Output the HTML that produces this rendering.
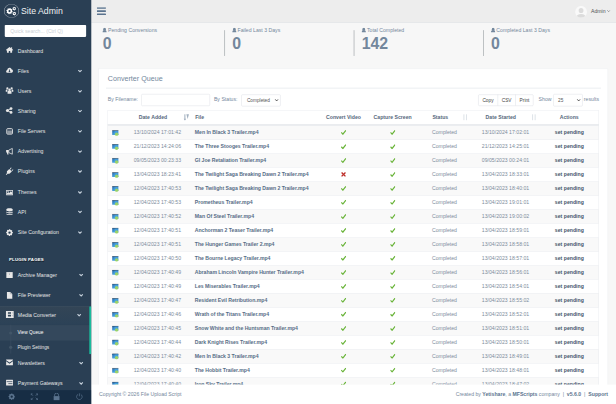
<!DOCTYPE html>
<html><head><meta charset="utf-8">
<style>
html,body{margin:0;padding:0;width:616px;height:404px;overflow:hidden;background:#F7F7F7;}
#wrap{position:absolute;left:0;top:0;width:1552px;height:1018px;transform:scale(0.396907);transform-origin:0 0;overflow:hidden;background:#F7F7F7;font-family:"Liberation Sans",sans-serif;font-size:13px;color:#73879C;}
.a{position:absolute;white-space:nowrap;}
#side{position:absolute;left:0;top:0;width:230px;height:1018px;background:#2A3F54;overflow:hidden;}
.mt{position:absolute;left:45px;line-height:20px;color:#E7E7E7;font-size:13px;white-space:nowrap;}
.ic{position:absolute;fill:#E7E7E7;overflow:visible;}
.chev{position:absolute;width:10px;height:7px;}
#top{position:absolute;left:230px;top:0;width:1322px;height:56.6px;background:#EDEDED;border-bottom:1px solid #D9DEE4;}
.tile{position:absolute;top:58px;width:326px;height:100px;}
.tile .sep{position:absolute;left:0;top:17.6px;height:65px;border-left:2px solid #ADB2B5;}
.tile .lab{position:absolute;left:20px;top:5.6px;line-height:20px;font-size:13px;white-space:nowrap;}
.tile .cnt{position:absolute;left:18px;top:31px;line-height:47px;font-size:40px;font-weight:bold;}
#panel{position:absolute;left:248px;top:173px;width:1282px;height:900px;background:#fff;border:1px solid #E6E9ED;}
#footer{position:absolute;left:230px;top:969px;width:1322px;height:49px;background:#fff;}
</style></head><body><div id="wrap">
<div id="top"></div>
<svg class="a" style="left:244px;top:18px;width:23px;height:20px" viewBox="0 0 23 20"><g fill="#5A738E"><rect x="0" y="0" width="23" height="4" rx="1"/><rect x="0" y="8" width="23" height="4" rx="1"/><rect x="0" y="16" width="23" height="4" rx="1"/></g></svg>
<svg class="a" style="left:1449px;top:14.5px;width:30px;height:30px" viewBox="0 0 30 30"><defs><clipPath id="avc"><circle cx="15" cy="15" r="15"/></clipPath></defs><circle cx="15" cy="15" r="15" fill="#F9F9F9"/><g clip-path="url(#avc)" fill="#DCDCDC"><ellipse cx="15" cy="11.5" rx="6" ry="6.5"/><path d="M3 31 c0-6 4-10.5 12-10.5 s12 4.5 12 10.5z"/></g></svg>
<div class="a" style="left:1489px;top:17.80px;line-height:20px;font-size:13px;color:#515356;">Admin</div>
<svg class="chev" style="left:1529px;top:25px;width:9px;height:6px" viewBox="0 0 10 7"><path d="M1 1.2 L5 5.2 L9 1.2" fill="none" stroke="#515356" stroke-width="1.6"/></svg>
<svg class="a" style="left:258.2px;top:69.5px;width:11px;height:12px;fill:#73879C" viewBox="0 0 12 14" preserveAspectRatio="none"><ellipse cx="6" cy="4" rx="3.6" ry="3.9"/><path d="M0 14 c0-4 1-6.5 3.5-7 c.8 .3 1.6 .5 2.5 .5 s1.7-.2 2.5-.5 c2.5 .5 3.5 3 3.5 7z"/><rect x="3.5" y="6" width="5" height="2"/></svg>
<div class="a" style="left:272.2px;top:65.60px;line-height:20px;font-size:13px;color:#73879C;">Pending Conversions</div>
<div class="a" style="left:259.0px;top:87.00px;line-height:47px;font-size:40px;font-weight:bold;color:#73879C">0</div>
<div class="a" style="left:565px;top:75.6px;width:2px;height:65px;background:#ADB2B5"></div>
<svg class="a" style="left:584.5px;top:69.5px;width:11px;height:12px;fill:#73879C" viewBox="0 0 12 14" preserveAspectRatio="none"><ellipse cx="6" cy="4" rx="3.6" ry="3.9"/><path d="M0 14 c0-4 1-6.5 3.5-7 c.8 .3 1.6 .5 2.5 .5 s1.7-.2 2.5-.5 c2.5 .5 3.5 3 3.5 7z"/><rect x="3.5" y="6" width="5" height="2"/></svg>
<div class="a" style="left:598.5px;top:65.60px;line-height:20px;font-size:13px;color:#73879C;">Failed Last 3 Days</div>
<div class="a" style="left:585.3px;top:87.00px;line-height:47px;font-size:40px;font-weight:bold;color:#73879C">0</div>
<div class="a" style="left:891px;top:75.6px;width:2px;height:65px;background:#ADB2B5"></div>
<svg class="a" style="left:910.5px;top:69.5px;width:11px;height:12px;fill:#73879C" viewBox="0 0 12 14" preserveAspectRatio="none"><ellipse cx="6" cy="4" rx="3.6" ry="3.9"/><path d="M0 14 c0-4 1-6.5 3.5-7 c.8 .3 1.6 .5 2.5 .5 s1.7-.2 2.5-.5 c2.5 .5 3.5 3 3.5 7z"/><rect x="3.5" y="6" width="5" height="2"/></svg>
<div class="a" style="left:924.5px;top:65.60px;line-height:20px;font-size:13px;color:#73879C;">Total Completed</div>
<div class="a" style="left:911.3px;top:87.00px;line-height:47px;font-size:40px;font-weight:bold;color:#73879C">142</div>
<div class="a" style="left:1217px;top:75.6px;width:2px;height:65px;background:#ADB2B5"></div>
<svg class="a" style="left:1236.5px;top:69.5px;width:11px;height:12px;fill:#73879C" viewBox="0 0 12 14" preserveAspectRatio="none"><ellipse cx="6" cy="4" rx="3.6" ry="3.9"/><path d="M0 14 c0-4 1-6.5 3.5-7 c.8 .3 1.6 .5 2.5 .5 s1.7-.2 2.5-.5 c2.5 .5 3.5 3 3.5 7z"/><rect x="3.5" y="6" width="5" height="2"/></svg>
<div class="a" style="left:1250.5px;top:65.60px;line-height:20px;font-size:13px;color:#73879C;">Completed Last 3 Days</div>
<div class="a" style="left:1237.3px;top:87.00px;line-height:47px;font-size:40px;font-weight:bold;color:#73879C">0</div>
<div class="a" style="left:248px;top:173px;width:1282px;height:900px;background:#fff;border:1px solid #E6E9ED;"></div>
<div class="a" style="left:271.7px;top:187.70px;line-height:20px;font-size:18px;color:#73879C;line-height:20px;">Converter Queue</div>
<div class="a" style="left:266.5px;top:220.8px;width:1247.5px;height:2px;background:#E6E9ED;"></div>
<div class="a" style="left:271.7px;top:240.00px;line-height:20px;font-size:13px;color:#73879C;">By Filename:</div>
<div class="a" style="left:356px;top:237px;width:171px;height:28px;border:1px solid #D5DAE0;border-radius:3px;background:#fff"></div>
<div class="a" style="left:539px;top:240.00px;line-height:20px;font-size:13px;color:#73879C;">By Status:</div>
<div class="a" style="left:608px;top:237.5px;width:97px;height:28px;border:1px solid #D5DAE0;border-radius:3px;background:#fff"></div>
<div class="a" style="left:622px;top:242.00px;line-height:20px;font-size:12px;color:#555;">Completed</div>
<svg class="chev" style="left:692px;top:249px;width:10px;height:7px" viewBox="0 0 10 7"><path d="M1 1.2 L5 5.2 L9 1.2" fill="none" stroke="#444" stroke-width="2.4"/></svg>
<div class="a" style="left:1205px;top:238px;width:137px;height:27px;border:1px solid #D5DAE0;border-radius:3px;background:#fff"></div>
<div class="a" style="left:1254px;top:238px;width:1px;height:28px;background:#D5DAE0"></div>
<div class="a" style="left:1299px;top:238px;width:1px;height:28px;background:#D5DAE0"></div>
<div class="a" style="left:1029.50px;width:400px;text-align:center;top:243.50px;line-height:20px;font-size:12px;color:#444;">Copy</div>
<div class="a" style="left:1076.50px;width:400px;text-align:center;top:243.50px;line-height:20px;font-size:12px;color:#444;">CSV</div>
<div class="a" style="left:1121.50px;width:400px;text-align:center;top:243.50px;line-height:20px;font-size:12px;color:#444;">Print</div>
<div class="a" style="left:1357px;top:240.00px;line-height:20px;font-size:13px;color:#73879C;">Show</div>
<div class="a" style="left:1394px;top:237px;width:72px;height:29px;border:1px solid #D5DAE0;border-radius:3px;background:#fff"></div>
<div class="a" style="left:1406px;top:242.00px;line-height:20px;font-size:12px;color:#555;">25</div>
<svg class="chev" style="left:1453px;top:249px;width:10px;height:7px" viewBox="0 0 10 7"><path d="M1 1.2 L5 5.2 L9 1.2" fill="none" stroke="#444" stroke-width="2.4"/></svg>
<div class="a" style="left:1471px;top:240.00px;line-height:20px;font-size:13px;color:#73879C;">results</div>
<div class="a" style="left:270.6px;top:278px;width:1238.9px;height:38.69999999999999px;border:1px solid #E6E9ED;border-bottom:0;box-sizing:border-box;background:#fff"></div>
<div class="a" style="left:270.6px;top:313.2px;width:1238.9px;height:3.5px;background:#E4E7EB"></div>
<div class="a" style="left:185.40px;width:400px;text-align:center;top:286.00px;line-height:20px;font-size:13px;color:#55687C;font-weight:bold;">Date Added</div>
<div class="a" style="left:491.8px;top:286.00px;line-height:20px;font-size:13px;color:#55687C;font-weight:bold;">File</div>
<div class="a" style="left:665.50px;width:400px;text-align:center;top:286.00px;line-height:20px;font-size:13px;color:#55687C;font-weight:bold;">Convert Video</div>
<div class="a" style="left:789.20px;width:400px;text-align:center;top:286.00px;line-height:20px;font-size:13px;color:#55687C;font-weight:bold;">Capture Screen</div>
<div class="a" style="left:1089.4px;top:286.00px;line-height:20px;font-size:13px;color:#55687C;font-weight:bold;">Status</div>
<div class="a" style="left:1061.80px;width:400px;text-align:center;top:286.00px;line-height:20px;font-size:13px;color:#55687C;font-weight:bold;">Date Started</div>
<div class="a" style="left:1234.20px;width:400px;text-align:center;top:286.00px;line-height:20px;font-size:13px;color:#55687C;font-weight:bold;">Actions</div>
<svg class="a" style="left:461.6px;top:287px;width:15px;height:17px" viewBox="0 0 15 17"><g fill="#A3B1C0"><rect x="2.5" y="1" width="2.6" height="15"/><path d="M0.5 12 h6.6 l-3.3 4z"/><path d="M7.5 1 h6.5 l-3.2 12z"/></g></svg>
<svg class="a" style="left:1165px;top:287px;width:15px;height:17px" viewBox="0 0 15 17"><g fill="#DFE4E9"><rect x="2.5" y="1" width="2.6" height="15"/><rect x="9" y="1" width="2.6" height="15"/></g></svg>
<svg class="a" style="left:1338px;top:287px;width:15px;height:17px" viewBox="0 0 15 17"><g fill="#DFE4E9"><rect x="2.5" y="1" width="2.6" height="15"/><rect x="9" y="1" width="2.6" height="15"/></g></svg>
<div class="a" style="left:270.6px;top:316.70px;width:1238.9px;height:35.23px;background:#F9F9F9;border-left:1px solid #E6E9ED;border-right:1px solid #E6E9ED;box-sizing:border-box"></div>
<svg class="a" style="left:281px;top:326.81px;width:19px;height:15.5px" viewBox="0 0 16.5 15.5"><defs><linearGradient id="fg" x1="0" y1="0" x2="1" y2="0.6"><stop offset="0" stop-color="#1F5E9E"/><stop offset="0.55" stop-color="#45A0E0"/><stop offset="1" stop-color="#3B93D6"/></linearGradient></defs><rect x="0.5" y="1.5" width="15.5" height="11.5" rx="0.8" fill="url(#fg)"/><rect x="0.5" y="1" width="15.5" height="1.4" fill="#3D4A58"/><circle cx="11.6" cy="11.3" r="4.5" fill="#9AD26A"/></svg>
<div class="a" style="left:196.60px;width:400px;text-align:center;top:324.31px;line-height:20px;font-size:13px;color:#7D8C9C;">13/10/2024 17:01:42</div>
<div class="a" style="left:490.8px;top:324.31px;line-height:20px;font-size:13px;color:#566D86;font-weight:bold;letter-spacing:-0.08px;">Men In Black 3 Trailer.mp4</div>
<svg class="a" style="left:858.5px;top:327.31px;width:13px;height:13px" viewBox="0 0 12 12"><path d="M0.8 6.2 L4.5 10.2 L11.5 1.2" fill="none" stroke="#6AB43A" stroke-width="2.8"/></svg>
<svg class="a" style="left:983px;top:327.31px;width:13px;height:13px" viewBox="0 0 12 12"><path d="M0.8 6.2 L4.5 10.2 L11.5 1.2" fill="none" stroke="#6AB43A" stroke-width="2.8"/></svg>
<div class="a" style="left:1088.4px;top:324.31px;line-height:20px;font-size:13px;color:#7D8C9C;">Completed</div>
<div class="a" style="left:1073.60px;width:400px;text-align:center;top:324.31px;line-height:20px;font-size:13px;color:#7D8C9C;">13/10/2024 17:02:01</div>
<div class="a" style="left:1234.40px;width:400px;text-align:center;top:324.31px;line-height:20px;font-size:13px;color:#44556A;font-weight:bold;">set pending</div>
<div class="a" style="left:270.6px;top:351.93px;width:1238.9px;height:35.23px;background:#fff;border-left:1px solid #E6E9ED;border-right:1px solid #E6E9ED;box-sizing:border-box"></div>
<div class="a" style="left:270.6px;top:351.43px;width:1238.9px;height:1px;background:#E6E9ED"></div>
<svg class="a" style="left:281px;top:362.05px;width:19px;height:15.5px" viewBox="0 0 16.5 15.5"><defs><linearGradient id="fg" x1="0" y1="0" x2="1" y2="0.6"><stop offset="0" stop-color="#1F5E9E"/><stop offset="0.55" stop-color="#45A0E0"/><stop offset="1" stop-color="#3B93D6"/></linearGradient></defs><rect x="0.5" y="1.5" width="15.5" height="11.5" rx="0.8" fill="url(#fg)"/><rect x="0.5" y="1" width="15.5" height="1.4" fill="#3D4A58"/><circle cx="11.6" cy="11.3" r="4.5" fill="#9AD26A"/></svg>
<div class="a" style="left:196.60px;width:400px;text-align:center;top:359.55px;line-height:20px;font-size:13px;color:#7D8C9C;">21/12/2023 14:24:06</div>
<div class="a" style="left:490.8px;top:359.55px;line-height:20px;font-size:13px;color:#566D86;font-weight:bold;letter-spacing:-0.08px;">The Three Stooges Trailer.mp4</div>
<svg class="a" style="left:858.5px;top:362.55px;width:13px;height:13px" viewBox="0 0 12 12"><path d="M0.8 6.2 L4.5 10.2 L11.5 1.2" fill="none" stroke="#6AB43A" stroke-width="2.8"/></svg>
<svg class="a" style="left:983px;top:362.55px;width:13px;height:13px" viewBox="0 0 12 12"><path d="M0.8 6.2 L4.5 10.2 L11.5 1.2" fill="none" stroke="#6AB43A" stroke-width="2.8"/></svg>
<div class="a" style="left:1088.4px;top:359.55px;line-height:20px;font-size:13px;color:#7D8C9C;">Completed</div>
<div class="a" style="left:1073.60px;width:400px;text-align:center;top:359.55px;line-height:20px;font-size:13px;color:#7D8C9C;">21/12/2023 14:25:01</div>
<div class="a" style="left:1234.40px;width:400px;text-align:center;top:359.55px;line-height:20px;font-size:13px;color:#44556A;font-weight:bold;">set pending</div>
<div class="a" style="left:270.6px;top:387.16px;width:1238.9px;height:35.23px;background:#F9F9F9;border-left:1px solid #E6E9ED;border-right:1px solid #E6E9ED;box-sizing:border-box"></div>
<div class="a" style="left:270.6px;top:386.66px;width:1238.9px;height:1px;background:#E6E9ED"></div>
<svg class="a" style="left:281px;top:397.27px;width:19px;height:15.5px" viewBox="0 0 16.5 15.5"><defs><linearGradient id="fg" x1="0" y1="0" x2="1" y2="0.6"><stop offset="0" stop-color="#1F5E9E"/><stop offset="0.55" stop-color="#45A0E0"/><stop offset="1" stop-color="#3B93D6"/></linearGradient></defs><rect x="0.5" y="1.5" width="15.5" height="11.5" rx="0.8" fill="url(#fg)"/><rect x="0.5" y="1" width="15.5" height="1.4" fill="#3D4A58"/><circle cx="11.6" cy="11.3" r="4.5" fill="#9AD26A"/></svg>
<div class="a" style="left:196.60px;width:400px;text-align:center;top:394.77px;line-height:20px;font-size:13px;color:#7D8C9C;">09/05/2023 00:23:33</div>
<div class="a" style="left:490.8px;top:394.77px;line-height:20px;font-size:13px;color:#566D86;font-weight:bold;letter-spacing:-0.08px;">GI Joe Retaliation Trailer.mp4</div>
<svg class="a" style="left:858.5px;top:397.77px;width:13px;height:13px" viewBox="0 0 12 12"><path d="M0.8 6.2 L4.5 10.2 L11.5 1.2" fill="none" stroke="#6AB43A" stroke-width="2.8"/></svg>
<svg class="a" style="left:983px;top:397.77px;width:13px;height:13px" viewBox="0 0 12 12"><path d="M0.8 6.2 L4.5 10.2 L11.5 1.2" fill="none" stroke="#6AB43A" stroke-width="2.8"/></svg>
<div class="a" style="left:1088.4px;top:394.77px;line-height:20px;font-size:13px;color:#7D8C9C;">Completed</div>
<div class="a" style="left:1073.60px;width:400px;text-align:center;top:394.77px;line-height:20px;font-size:13px;color:#7D8C9C;">09/05/2023 00:24:01</div>
<div class="a" style="left:1234.40px;width:400px;text-align:center;top:394.77px;line-height:20px;font-size:13px;color:#44556A;font-weight:bold;">set pending</div>
<div class="a" style="left:270.6px;top:422.39px;width:1238.9px;height:35.23px;background:#fff;border-left:1px solid #E6E9ED;border-right:1px solid #E6E9ED;box-sizing:border-box"></div>
<div class="a" style="left:270.6px;top:421.89px;width:1238.9px;height:1px;background:#E6E9ED"></div>
<svg class="a" style="left:281px;top:432.50px;width:19px;height:15.5px" viewBox="0 0 16.5 15.5"><defs><linearGradient id="fg" x1="0" y1="0" x2="1" y2="0.6"><stop offset="0" stop-color="#1F5E9E"/><stop offset="0.55" stop-color="#45A0E0"/><stop offset="1" stop-color="#3B93D6"/></linearGradient></defs><rect x="0.5" y="1.5" width="15.5" height="11.5" rx="0.8" fill="url(#fg)"/><rect x="0.5" y="1" width="15.5" height="1.4" fill="#3D4A58"/><circle cx="11.6" cy="11.3" r="4.5" fill="#9AD26A"/></svg>
<div class="a" style="left:196.60px;width:400px;text-align:center;top:430.00px;line-height:20px;font-size:13px;color:#7D8C9C;">13/04/2023 18:23:41</div>
<div class="a" style="left:490.8px;top:430.00px;line-height:20px;font-size:13px;color:#566D86;font-weight:bold;letter-spacing:-0.08px;">The Twilight Saga Breaking Dawn 2 Trailer.mp4</div>
<svg class="a" style="left:858.5px;top:433.00px;width:13px;height:13px" viewBox="0 0 12 12"><path d="M1.5 1.5 L10.5 10.5 M10.5 1.5 L1.5 10.5" fill="none" stroke="#BE2F2A" stroke-width="3.2"/></svg>
<svg class="a" style="left:983px;top:433.00px;width:13px;height:13px" viewBox="0 0 12 12"><path d="M0.8 6.2 L4.5 10.2 L11.5 1.2" fill="none" stroke="#6AB43A" stroke-width="2.8"/></svg>
<div class="a" style="left:1088.4px;top:430.00px;line-height:20px;font-size:13px;color:#7D8C9C;">Completed</div>
<div class="a" style="left:1073.60px;width:400px;text-align:center;top:430.00px;line-height:20px;font-size:13px;color:#7D8C9C;">13/04/2023 18:33:01</div>
<div class="a" style="left:1234.40px;width:400px;text-align:center;top:430.00px;line-height:20px;font-size:13px;color:#44556A;font-weight:bold;">set pending</div>
<div class="a" style="left:270.6px;top:457.62px;width:1238.9px;height:35.23px;background:#F9F9F9;border-left:1px solid #E6E9ED;border-right:1px solid #E6E9ED;box-sizing:border-box"></div>
<div class="a" style="left:270.6px;top:457.12px;width:1238.9px;height:1px;background:#E6E9ED"></div>
<svg class="a" style="left:281px;top:467.74px;width:19px;height:15.5px" viewBox="0 0 16.5 15.5"><defs><linearGradient id="fg" x1="0" y1="0" x2="1" y2="0.6"><stop offset="0" stop-color="#1F5E9E"/><stop offset="0.55" stop-color="#45A0E0"/><stop offset="1" stop-color="#3B93D6"/></linearGradient></defs><rect x="0.5" y="1.5" width="15.5" height="11.5" rx="0.8" fill="url(#fg)"/><rect x="0.5" y="1" width="15.5" height="1.4" fill="#3D4A58"/><circle cx="11.6" cy="11.3" r="4.5" fill="#9AD26A"/></svg>
<div class="a" style="left:196.60px;width:400px;text-align:center;top:465.24px;line-height:20px;font-size:13px;color:#7D8C9C;">12/04/2023 17:40:53</div>
<div class="a" style="left:490.8px;top:465.24px;line-height:20px;font-size:13px;color:#566D86;font-weight:bold;letter-spacing:-0.08px;">The Twilight Saga Breaking Dawn 2 Trailer.mp4</div>
<svg class="a" style="left:858.5px;top:468.24px;width:13px;height:13px" viewBox="0 0 12 12"><path d="M0.8 6.2 L4.5 10.2 L11.5 1.2" fill="none" stroke="#6AB43A" stroke-width="2.8"/></svg>
<svg class="a" style="left:983px;top:468.24px;width:13px;height:13px" viewBox="0 0 12 12"><path d="M0.8 6.2 L4.5 10.2 L11.5 1.2" fill="none" stroke="#6AB43A" stroke-width="2.8"/></svg>
<div class="a" style="left:1088.4px;top:465.24px;line-height:20px;font-size:13px;color:#7D8C9C;">Completed</div>
<div class="a" style="left:1073.60px;width:400px;text-align:center;top:465.24px;line-height:20px;font-size:13px;color:#7D8C9C;">13/04/2023 18:40:01</div>
<div class="a" style="left:1234.40px;width:400px;text-align:center;top:465.24px;line-height:20px;font-size:13px;color:#44556A;font-weight:bold;">set pending</div>
<div class="a" style="left:270.6px;top:492.85px;width:1238.9px;height:35.23px;background:#fff;border-left:1px solid #E6E9ED;border-right:1px solid #E6E9ED;box-sizing:border-box"></div>
<div class="a" style="left:270.6px;top:492.35px;width:1238.9px;height:1px;background:#E6E9ED"></div>
<svg class="a" style="left:281px;top:502.96px;width:19px;height:15.5px" viewBox="0 0 16.5 15.5"><defs><linearGradient id="fg" x1="0" y1="0" x2="1" y2="0.6"><stop offset="0" stop-color="#1F5E9E"/><stop offset="0.55" stop-color="#45A0E0"/><stop offset="1" stop-color="#3B93D6"/></linearGradient></defs><rect x="0.5" y="1.5" width="15.5" height="11.5" rx="0.8" fill="url(#fg)"/><rect x="0.5" y="1" width="15.5" height="1.4" fill="#3D4A58"/><circle cx="11.6" cy="11.3" r="4.5" fill="#9AD26A"/></svg>
<div class="a" style="left:196.60px;width:400px;text-align:center;top:500.46px;line-height:20px;font-size:13px;color:#7D8C9C;">12/04/2023 17:40:53</div>
<div class="a" style="left:490.8px;top:500.46px;line-height:20px;font-size:13px;color:#566D86;font-weight:bold;letter-spacing:-0.08px;">Prometheus Trailer.mp4</div>
<svg class="a" style="left:858.5px;top:503.46px;width:13px;height:13px" viewBox="0 0 12 12"><path d="M0.8 6.2 L4.5 10.2 L11.5 1.2" fill="none" stroke="#6AB43A" stroke-width="2.8"/></svg>
<svg class="a" style="left:983px;top:503.46px;width:13px;height:13px" viewBox="0 0 12 12"><path d="M0.8 6.2 L4.5 10.2 L11.5 1.2" fill="none" stroke="#6AB43A" stroke-width="2.8"/></svg>
<div class="a" style="left:1088.4px;top:500.46px;line-height:20px;font-size:13px;color:#7D8C9C;">Completed</div>
<div class="a" style="left:1073.60px;width:400px;text-align:center;top:500.46px;line-height:20px;font-size:13px;color:#7D8C9C;">13/04/2023 19:01:01</div>
<div class="a" style="left:1234.40px;width:400px;text-align:center;top:500.46px;line-height:20px;font-size:13px;color:#44556A;font-weight:bold;">set pending</div>
<div class="a" style="left:270.6px;top:528.08px;width:1238.9px;height:35.23px;background:#F9F9F9;border-left:1px solid #E6E9ED;border-right:1px solid #E6E9ED;box-sizing:border-box"></div>
<div class="a" style="left:270.6px;top:527.58px;width:1238.9px;height:1px;background:#E6E9ED"></div>
<svg class="a" style="left:281px;top:538.19px;width:19px;height:15.5px" viewBox="0 0 16.5 15.5"><defs><linearGradient id="fg" x1="0" y1="0" x2="1" y2="0.6"><stop offset="0" stop-color="#1F5E9E"/><stop offset="0.55" stop-color="#45A0E0"/><stop offset="1" stop-color="#3B93D6"/></linearGradient></defs><rect x="0.5" y="1.5" width="15.5" height="11.5" rx="0.8" fill="url(#fg)"/><rect x="0.5" y="1" width="15.5" height="1.4" fill="#3D4A58"/><circle cx="11.6" cy="11.3" r="4.5" fill="#9AD26A"/></svg>
<div class="a" style="left:196.60px;width:400px;text-align:center;top:535.69px;line-height:20px;font-size:13px;color:#7D8C9C;">12/04/2023 17:40:52</div>
<div class="a" style="left:490.8px;top:535.69px;line-height:20px;font-size:13px;color:#566D86;font-weight:bold;letter-spacing:-0.08px;">Man Of Steel Trailer.mp4</div>
<svg class="a" style="left:858.5px;top:538.69px;width:13px;height:13px" viewBox="0 0 12 12"><path d="M0.8 6.2 L4.5 10.2 L11.5 1.2" fill="none" stroke="#6AB43A" stroke-width="2.8"/></svg>
<svg class="a" style="left:983px;top:538.69px;width:13px;height:13px" viewBox="0 0 12 12"><path d="M0.8 6.2 L4.5 10.2 L11.5 1.2" fill="none" stroke="#6AB43A" stroke-width="2.8"/></svg>
<div class="a" style="left:1088.4px;top:535.69px;line-height:20px;font-size:13px;color:#7D8C9C;">Completed</div>
<div class="a" style="left:1073.60px;width:400px;text-align:center;top:535.69px;line-height:20px;font-size:13px;color:#7D8C9C;">13/04/2023 19:00:02</div>
<div class="a" style="left:1234.40px;width:400px;text-align:center;top:535.69px;line-height:20px;font-size:13px;color:#44556A;font-weight:bold;">set pending</div>
<div class="a" style="left:270.6px;top:563.31px;width:1238.9px;height:35.23px;background:#fff;border-left:1px solid #E6E9ED;border-right:1px solid #E6E9ED;box-sizing:border-box"></div>
<div class="a" style="left:270.6px;top:562.81px;width:1238.9px;height:1px;background:#E6E9ED"></div>
<svg class="a" style="left:281px;top:573.42px;width:19px;height:15.5px" viewBox="0 0 16.5 15.5"><defs><linearGradient id="fg" x1="0" y1="0" x2="1" y2="0.6"><stop offset="0" stop-color="#1F5E9E"/><stop offset="0.55" stop-color="#45A0E0"/><stop offset="1" stop-color="#3B93D6"/></linearGradient></defs><rect x="0.5" y="1.5" width="15.5" height="11.5" rx="0.8" fill="url(#fg)"/><rect x="0.5" y="1" width="15.5" height="1.4" fill="#3D4A58"/><circle cx="11.6" cy="11.3" r="4.5" fill="#9AD26A"/></svg>
<div class="a" style="left:196.60px;width:400px;text-align:center;top:570.92px;line-height:20px;font-size:13px;color:#7D8C9C;">12/04/2023 17:40:51</div>
<div class="a" style="left:490.8px;top:570.92px;line-height:20px;font-size:13px;color:#566D86;font-weight:bold;letter-spacing:-0.08px;">Anchorman 2 Teaser Trailer.mp4</div>
<svg class="a" style="left:858.5px;top:573.92px;width:13px;height:13px" viewBox="0 0 12 12"><path d="M0.8 6.2 L4.5 10.2 L11.5 1.2" fill="none" stroke="#6AB43A" stroke-width="2.8"/></svg>
<svg class="a" style="left:983px;top:573.92px;width:13px;height:13px" viewBox="0 0 12 12"><path d="M0.8 6.2 L4.5 10.2 L11.5 1.2" fill="none" stroke="#6AB43A" stroke-width="2.8"/></svg>
<div class="a" style="left:1088.4px;top:570.92px;line-height:20px;font-size:13px;color:#7D8C9C;">Completed</div>
<div class="a" style="left:1073.60px;width:400px;text-align:center;top:570.92px;line-height:20px;font-size:13px;color:#7D8C9C;">13/04/2023 18:59:01</div>
<div class="a" style="left:1234.40px;width:400px;text-align:center;top:570.92px;line-height:20px;font-size:13px;color:#44556A;font-weight:bold;">set pending</div>
<div class="a" style="left:270.6px;top:598.54px;width:1238.9px;height:35.23px;background:#F9F9F9;border-left:1px solid #E6E9ED;border-right:1px solid #E6E9ED;box-sizing:border-box"></div>
<div class="a" style="left:270.6px;top:598.04px;width:1238.9px;height:1px;background:#E6E9ED"></div>
<svg class="a" style="left:281px;top:608.65px;width:19px;height:15.5px" viewBox="0 0 16.5 15.5"><defs><linearGradient id="fg" x1="0" y1="0" x2="1" y2="0.6"><stop offset="0" stop-color="#1F5E9E"/><stop offset="0.55" stop-color="#45A0E0"/><stop offset="1" stop-color="#3B93D6"/></linearGradient></defs><rect x="0.5" y="1.5" width="15.5" height="11.5" rx="0.8" fill="url(#fg)"/><rect x="0.5" y="1" width="15.5" height="1.4" fill="#3D4A58"/><circle cx="11.6" cy="11.3" r="4.5" fill="#9AD26A"/></svg>
<div class="a" style="left:196.60px;width:400px;text-align:center;top:606.15px;line-height:20px;font-size:13px;color:#7D8C9C;">12/04/2023 17:40:51</div>
<div class="a" style="left:490.8px;top:606.15px;line-height:20px;font-size:13px;color:#566D86;font-weight:bold;letter-spacing:-0.08px;">The Hunger Games Trailer 2.mp4</div>
<svg class="a" style="left:858.5px;top:609.15px;width:13px;height:13px" viewBox="0 0 12 12"><path d="M0.8 6.2 L4.5 10.2 L11.5 1.2" fill="none" stroke="#6AB43A" stroke-width="2.8"/></svg>
<svg class="a" style="left:983px;top:609.15px;width:13px;height:13px" viewBox="0 0 12 12"><path d="M0.8 6.2 L4.5 10.2 L11.5 1.2" fill="none" stroke="#6AB43A" stroke-width="2.8"/></svg>
<div class="a" style="left:1088.4px;top:606.15px;line-height:20px;font-size:13px;color:#7D8C9C;">Completed</div>
<div class="a" style="left:1073.60px;width:400px;text-align:center;top:606.15px;line-height:20px;font-size:13px;color:#7D8C9C;">13/04/2023 18:58:01</div>
<div class="a" style="left:1234.40px;width:400px;text-align:center;top:606.15px;line-height:20px;font-size:13px;color:#44556A;font-weight:bold;">set pending</div>
<div class="a" style="left:270.6px;top:633.77px;width:1238.9px;height:35.23px;background:#fff;border-left:1px solid #E6E9ED;border-right:1px solid #E6E9ED;box-sizing:border-box"></div>
<div class="a" style="left:270.6px;top:633.27px;width:1238.9px;height:1px;background:#E6E9ED"></div>
<svg class="a" style="left:281px;top:643.88px;width:19px;height:15.5px" viewBox="0 0 16.5 15.5"><defs><linearGradient id="fg" x1="0" y1="0" x2="1" y2="0.6"><stop offset="0" stop-color="#1F5E9E"/><stop offset="0.55" stop-color="#45A0E0"/><stop offset="1" stop-color="#3B93D6"/></linearGradient></defs><rect x="0.5" y="1.5" width="15.5" height="11.5" rx="0.8" fill="url(#fg)"/><rect x="0.5" y="1" width="15.5" height="1.4" fill="#3D4A58"/><circle cx="11.6" cy="11.3" r="4.5" fill="#9AD26A"/></svg>
<div class="a" style="left:196.60px;width:400px;text-align:center;top:641.38px;line-height:20px;font-size:13px;color:#7D8C9C;">12/04/2023 17:40:50</div>
<div class="a" style="left:490.8px;top:641.38px;line-height:20px;font-size:13px;color:#566D86;font-weight:bold;letter-spacing:-0.08px;">The Bourne Legacy Trailer.mp4</div>
<svg class="a" style="left:858.5px;top:644.38px;width:13px;height:13px" viewBox="0 0 12 12"><path d="M0.8 6.2 L4.5 10.2 L11.5 1.2" fill="none" stroke="#6AB43A" stroke-width="2.8"/></svg>
<svg class="a" style="left:983px;top:644.38px;width:13px;height:13px" viewBox="0 0 12 12"><path d="M0.8 6.2 L4.5 10.2 L11.5 1.2" fill="none" stroke="#6AB43A" stroke-width="2.8"/></svg>
<div class="a" style="left:1088.4px;top:641.38px;line-height:20px;font-size:13px;color:#7D8C9C;">Completed</div>
<div class="a" style="left:1073.60px;width:400px;text-align:center;top:641.38px;line-height:20px;font-size:13px;color:#7D8C9C;">13/04/2023 18:57:01</div>
<div class="a" style="left:1234.40px;width:400px;text-align:center;top:641.38px;line-height:20px;font-size:13px;color:#44556A;font-weight:bold;">set pending</div>
<div class="a" style="left:270.6px;top:669.00px;width:1238.9px;height:35.23px;background:#F9F9F9;border-left:1px solid #E6E9ED;border-right:1px solid #E6E9ED;box-sizing:border-box"></div>
<div class="a" style="left:270.6px;top:668.50px;width:1238.9px;height:1px;background:#E6E9ED"></div>
<svg class="a" style="left:281px;top:679.12px;width:19px;height:15.5px" viewBox="0 0 16.5 15.5"><defs><linearGradient id="fg" x1="0" y1="0" x2="1" y2="0.6"><stop offset="0" stop-color="#1F5E9E"/><stop offset="0.55" stop-color="#45A0E0"/><stop offset="1" stop-color="#3B93D6"/></linearGradient></defs><rect x="0.5" y="1.5" width="15.5" height="11.5" rx="0.8" fill="url(#fg)"/><rect x="0.5" y="1" width="15.5" height="1.4" fill="#3D4A58"/><circle cx="11.6" cy="11.3" r="4.5" fill="#9AD26A"/></svg>
<div class="a" style="left:196.60px;width:400px;text-align:center;top:676.62px;line-height:20px;font-size:13px;color:#7D8C9C;">12/04/2023 17:40:49</div>
<div class="a" style="left:490.8px;top:676.62px;line-height:20px;font-size:13px;color:#566D86;font-weight:bold;letter-spacing:-0.08px;">Abraham Lincoln Vampire Hunter Trailer.mp4</div>
<svg class="a" style="left:858.5px;top:679.62px;width:13px;height:13px" viewBox="0 0 12 12"><path d="M0.8 6.2 L4.5 10.2 L11.5 1.2" fill="none" stroke="#6AB43A" stroke-width="2.8"/></svg>
<svg class="a" style="left:983px;top:679.62px;width:13px;height:13px" viewBox="0 0 12 12"><path d="M0.8 6.2 L4.5 10.2 L11.5 1.2" fill="none" stroke="#6AB43A" stroke-width="2.8"/></svg>
<div class="a" style="left:1088.4px;top:676.62px;line-height:20px;font-size:13px;color:#7D8C9C;">Completed</div>
<div class="a" style="left:1073.60px;width:400px;text-align:center;top:676.62px;line-height:20px;font-size:13px;color:#7D8C9C;">13/04/2023 18:56:01</div>
<div class="a" style="left:1234.40px;width:400px;text-align:center;top:676.62px;line-height:20px;font-size:13px;color:#44556A;font-weight:bold;">set pending</div>
<div class="a" style="left:270.6px;top:704.23px;width:1238.9px;height:35.23px;background:#fff;border-left:1px solid #E6E9ED;border-right:1px solid #E6E9ED;box-sizing:border-box"></div>
<div class="a" style="left:270.6px;top:703.73px;width:1238.9px;height:1px;background:#E6E9ED"></div>
<svg class="a" style="left:281px;top:714.35px;width:19px;height:15.5px" viewBox="0 0 16.5 15.5"><defs><linearGradient id="fg" x1="0" y1="0" x2="1" y2="0.6"><stop offset="0" stop-color="#1F5E9E"/><stop offset="0.55" stop-color="#45A0E0"/><stop offset="1" stop-color="#3B93D6"/></linearGradient></defs><rect x="0.5" y="1.5" width="15.5" height="11.5" rx="0.8" fill="url(#fg)"/><rect x="0.5" y="1" width="15.5" height="1.4" fill="#3D4A58"/><circle cx="11.6" cy="11.3" r="4.5" fill="#9AD26A"/></svg>
<div class="a" style="left:196.60px;width:400px;text-align:center;top:711.85px;line-height:20px;font-size:13px;color:#7D8C9C;">12/04/2023 17:40:49</div>
<div class="a" style="left:490.8px;top:711.85px;line-height:20px;font-size:13px;color:#566D86;font-weight:bold;letter-spacing:-0.08px;">Les Miserables Trailer.mp4</div>
<svg class="a" style="left:858.5px;top:714.85px;width:13px;height:13px" viewBox="0 0 12 12"><path d="M0.8 6.2 L4.5 10.2 L11.5 1.2" fill="none" stroke="#6AB43A" stroke-width="2.8"/></svg>
<svg class="a" style="left:983px;top:714.85px;width:13px;height:13px" viewBox="0 0 12 12"><path d="M0.8 6.2 L4.5 10.2 L11.5 1.2" fill="none" stroke="#6AB43A" stroke-width="2.8"/></svg>
<div class="a" style="left:1088.4px;top:711.85px;line-height:20px;font-size:13px;color:#7D8C9C;">Completed</div>
<div class="a" style="left:1073.60px;width:400px;text-align:center;top:711.85px;line-height:20px;font-size:13px;color:#7D8C9C;">13/04/2023 18:54:01</div>
<div class="a" style="left:1234.40px;width:400px;text-align:center;top:711.85px;line-height:20px;font-size:13px;color:#44556A;font-weight:bold;">set pending</div>
<div class="a" style="left:270.6px;top:739.46px;width:1238.9px;height:35.23px;background:#F9F9F9;border-left:1px solid #E6E9ED;border-right:1px solid #E6E9ED;box-sizing:border-box"></div>
<div class="a" style="left:270.6px;top:738.96px;width:1238.9px;height:1px;background:#E6E9ED"></div>
<svg class="a" style="left:281px;top:749.58px;width:19px;height:15.5px" viewBox="0 0 16.5 15.5"><defs><linearGradient id="fg" x1="0" y1="0" x2="1" y2="0.6"><stop offset="0" stop-color="#1F5E9E"/><stop offset="0.55" stop-color="#45A0E0"/><stop offset="1" stop-color="#3B93D6"/></linearGradient></defs><rect x="0.5" y="1.5" width="15.5" height="11.5" rx="0.8" fill="url(#fg)"/><rect x="0.5" y="1" width="15.5" height="1.4" fill="#3D4A58"/><circle cx="11.6" cy="11.3" r="4.5" fill="#9AD26A"/></svg>
<div class="a" style="left:196.60px;width:400px;text-align:center;top:747.08px;line-height:20px;font-size:13px;color:#7D8C9C;">12/04/2023 17:40:47</div>
<div class="a" style="left:490.8px;top:747.08px;line-height:20px;font-size:13px;color:#566D86;font-weight:bold;letter-spacing:-0.08px;">Resident Evil Retribution.mp4</div>
<svg class="a" style="left:858.5px;top:750.08px;width:13px;height:13px" viewBox="0 0 12 12"><path d="M0.8 6.2 L4.5 10.2 L11.5 1.2" fill="none" stroke="#6AB43A" stroke-width="2.8"/></svg>
<svg class="a" style="left:983px;top:750.08px;width:13px;height:13px" viewBox="0 0 12 12"><path d="M0.8 6.2 L4.5 10.2 L11.5 1.2" fill="none" stroke="#6AB43A" stroke-width="2.8"/></svg>
<div class="a" style="left:1088.4px;top:747.08px;line-height:20px;font-size:13px;color:#7D8C9C;">Completed</div>
<div class="a" style="left:1073.60px;width:400px;text-align:center;top:747.08px;line-height:20px;font-size:13px;color:#7D8C9C;">13/04/2023 18:55:02</div>
<div class="a" style="left:1234.40px;width:400px;text-align:center;top:747.08px;line-height:20px;font-size:13px;color:#44556A;font-weight:bold;">set pending</div>
<div class="a" style="left:270.6px;top:774.69px;width:1238.9px;height:35.23px;background:#fff;border-left:1px solid #E6E9ED;border-right:1px solid #E6E9ED;box-sizing:border-box"></div>
<div class="a" style="left:270.6px;top:774.19px;width:1238.9px;height:1px;background:#E6E9ED"></div>
<svg class="a" style="left:281px;top:784.80px;width:19px;height:15.5px" viewBox="0 0 16.5 15.5"><defs><linearGradient id="fg" x1="0" y1="0" x2="1" y2="0.6"><stop offset="0" stop-color="#1F5E9E"/><stop offset="0.55" stop-color="#45A0E0"/><stop offset="1" stop-color="#3B93D6"/></linearGradient></defs><rect x="0.5" y="1.5" width="15.5" height="11.5" rx="0.8" fill="url(#fg)"/><rect x="0.5" y="1" width="15.5" height="1.4" fill="#3D4A58"/><circle cx="11.6" cy="11.3" r="4.5" fill="#9AD26A"/></svg>
<div class="a" style="left:196.60px;width:400px;text-align:center;top:782.30px;line-height:20px;font-size:13px;color:#7D8C9C;">12/04/2023 17:40:46</div>
<div class="a" style="left:490.8px;top:782.30px;line-height:20px;font-size:13px;color:#566D86;font-weight:bold;letter-spacing:-0.08px;">Wrath of the Titans Trailer.mp4</div>
<svg class="a" style="left:858.5px;top:785.30px;width:13px;height:13px" viewBox="0 0 12 12"><path d="M0.8 6.2 L4.5 10.2 L11.5 1.2" fill="none" stroke="#6AB43A" stroke-width="2.8"/></svg>
<svg class="a" style="left:983px;top:785.30px;width:13px;height:13px" viewBox="0 0 12 12"><path d="M0.8 6.2 L4.5 10.2 L11.5 1.2" fill="none" stroke="#6AB43A" stroke-width="2.8"/></svg>
<div class="a" style="left:1088.4px;top:782.30px;line-height:20px;font-size:13px;color:#7D8C9C;">Completed</div>
<div class="a" style="left:1073.60px;width:400px;text-align:center;top:782.30px;line-height:20px;font-size:13px;color:#7D8C9C;">13/04/2023 18:52:01</div>
<div class="a" style="left:1234.40px;width:400px;text-align:center;top:782.30px;line-height:20px;font-size:13px;color:#44556A;font-weight:bold;">set pending</div>
<div class="a" style="left:270.6px;top:809.92px;width:1238.9px;height:35.23px;background:#F9F9F9;border-left:1px solid #E6E9ED;border-right:1px solid #E6E9ED;box-sizing:border-box"></div>
<div class="a" style="left:270.6px;top:809.42px;width:1238.9px;height:1px;background:#E6E9ED"></div>
<svg class="a" style="left:281px;top:820.03px;width:19px;height:15.5px" viewBox="0 0 16.5 15.5"><defs><linearGradient id="fg" x1="0" y1="0" x2="1" y2="0.6"><stop offset="0" stop-color="#1F5E9E"/><stop offset="0.55" stop-color="#45A0E0"/><stop offset="1" stop-color="#3B93D6"/></linearGradient></defs><rect x="0.5" y="1.5" width="15.5" height="11.5" rx="0.8" fill="url(#fg)"/><rect x="0.5" y="1" width="15.5" height="1.4" fill="#3D4A58"/><circle cx="11.6" cy="11.3" r="4.5" fill="#9AD26A"/></svg>
<div class="a" style="left:196.60px;width:400px;text-align:center;top:817.53px;line-height:20px;font-size:13px;color:#7D8C9C;">12/04/2023 17:40:45</div>
<div class="a" style="left:490.8px;top:817.53px;line-height:20px;font-size:13px;color:#566D86;font-weight:bold;letter-spacing:-0.08px;">Snow White and the Huntsman Trailer.mp4</div>
<svg class="a" style="left:858.5px;top:820.53px;width:13px;height:13px" viewBox="0 0 12 12"><path d="M0.8 6.2 L4.5 10.2 L11.5 1.2" fill="none" stroke="#6AB43A" stroke-width="2.8"/></svg>
<svg class="a" style="left:983px;top:820.53px;width:13px;height:13px" viewBox="0 0 12 12"><path d="M0.8 6.2 L4.5 10.2 L11.5 1.2" fill="none" stroke="#6AB43A" stroke-width="2.8"/></svg>
<div class="a" style="left:1088.4px;top:817.53px;line-height:20px;font-size:13px;color:#7D8C9C;">Completed</div>
<div class="a" style="left:1073.60px;width:400px;text-align:center;top:817.53px;line-height:20px;font-size:13px;color:#7D8C9C;">13/04/2023 18:51:01</div>
<div class="a" style="left:1234.40px;width:400px;text-align:center;top:817.53px;line-height:20px;font-size:13px;color:#44556A;font-weight:bold;">set pending</div>
<div class="a" style="left:270.6px;top:845.15px;width:1238.9px;height:35.23px;background:#fff;border-left:1px solid #E6E9ED;border-right:1px solid #E6E9ED;box-sizing:border-box"></div>
<div class="a" style="left:270.6px;top:844.65px;width:1238.9px;height:1px;background:#E6E9ED"></div>
<svg class="a" style="left:281px;top:855.26px;width:19px;height:15.5px" viewBox="0 0 16.5 15.5"><defs><linearGradient id="fg" x1="0" y1="0" x2="1" y2="0.6"><stop offset="0" stop-color="#1F5E9E"/><stop offset="0.55" stop-color="#45A0E0"/><stop offset="1" stop-color="#3B93D6"/></linearGradient></defs><rect x="0.5" y="1.5" width="15.5" height="11.5" rx="0.8" fill="url(#fg)"/><rect x="0.5" y="1" width="15.5" height="1.4" fill="#3D4A58"/><circle cx="11.6" cy="11.3" r="4.5" fill="#9AD26A"/></svg>
<div class="a" style="left:196.60px;width:400px;text-align:center;top:852.76px;line-height:20px;font-size:13px;color:#7D8C9C;">12/04/2023 17:40:44</div>
<div class="a" style="left:490.8px;top:852.76px;line-height:20px;font-size:13px;color:#566D86;font-weight:bold;letter-spacing:-0.08px;">Dark Knight Rises Trailer.mp4</div>
<svg class="a" style="left:858.5px;top:855.76px;width:13px;height:13px" viewBox="0 0 12 12"><path d="M0.8 6.2 L4.5 10.2 L11.5 1.2" fill="none" stroke="#6AB43A" stroke-width="2.8"/></svg>
<svg class="a" style="left:983px;top:855.76px;width:13px;height:13px" viewBox="0 0 12 12"><path d="M0.8 6.2 L4.5 10.2 L11.5 1.2" fill="none" stroke="#6AB43A" stroke-width="2.8"/></svg>
<div class="a" style="left:1088.4px;top:852.76px;line-height:20px;font-size:13px;color:#7D8C9C;">Completed</div>
<div class="a" style="left:1073.60px;width:400px;text-align:center;top:852.76px;line-height:20px;font-size:13px;color:#7D8C9C;">13/04/2023 18:50:01</div>
<div class="a" style="left:1234.40px;width:400px;text-align:center;top:852.76px;line-height:20px;font-size:13px;color:#44556A;font-weight:bold;">set pending</div>
<div class="a" style="left:270.6px;top:880.38px;width:1238.9px;height:35.23px;background:#F9F9F9;border-left:1px solid #E6E9ED;border-right:1px solid #E6E9ED;box-sizing:border-box"></div>
<div class="a" style="left:270.6px;top:879.88px;width:1238.9px;height:1px;background:#E6E9ED"></div>
<svg class="a" style="left:281px;top:890.49px;width:19px;height:15.5px" viewBox="0 0 16.5 15.5"><defs><linearGradient id="fg" x1="0" y1="0" x2="1" y2="0.6"><stop offset="0" stop-color="#1F5E9E"/><stop offset="0.55" stop-color="#45A0E0"/><stop offset="1" stop-color="#3B93D6"/></linearGradient></defs><rect x="0.5" y="1.5" width="15.5" height="11.5" rx="0.8" fill="url(#fg)"/><rect x="0.5" y="1" width="15.5" height="1.4" fill="#3D4A58"/><circle cx="11.6" cy="11.3" r="4.5" fill="#9AD26A"/></svg>
<div class="a" style="left:196.60px;width:400px;text-align:center;top:887.99px;line-height:20px;font-size:13px;color:#7D8C9C;">12/04/2023 17:40:42</div>
<div class="a" style="left:490.8px;top:887.99px;line-height:20px;font-size:13px;color:#566D86;font-weight:bold;letter-spacing:-0.08px;">Men In Black 3 Trailer.mp4</div>
<svg class="a" style="left:858.5px;top:890.99px;width:13px;height:13px" viewBox="0 0 12 12"><path d="M0.8 6.2 L4.5 10.2 L11.5 1.2" fill="none" stroke="#6AB43A" stroke-width="2.8"/></svg>
<svg class="a" style="left:983px;top:890.99px;width:13px;height:13px" viewBox="0 0 12 12"><path d="M0.8 6.2 L4.5 10.2 L11.5 1.2" fill="none" stroke="#6AB43A" stroke-width="2.8"/></svg>
<div class="a" style="left:1088.4px;top:887.99px;line-height:20px;font-size:13px;color:#7D8C9C;">Completed</div>
<div class="a" style="left:1073.60px;width:400px;text-align:center;top:887.99px;line-height:20px;font-size:13px;color:#7D8C9C;">13/04/2023 18:49:01</div>
<div class="a" style="left:1234.40px;width:400px;text-align:center;top:887.99px;line-height:20px;font-size:13px;color:#44556A;font-weight:bold;">set pending</div>
<div class="a" style="left:270.6px;top:915.61px;width:1238.9px;height:35.23px;background:#fff;border-left:1px solid #E6E9ED;border-right:1px solid #E6E9ED;box-sizing:border-box"></div>
<div class="a" style="left:270.6px;top:915.11px;width:1238.9px;height:1px;background:#E6E9ED"></div>
<svg class="a" style="left:281px;top:925.72px;width:19px;height:15.5px" viewBox="0 0 16.5 15.5"><defs><linearGradient id="fg" x1="0" y1="0" x2="1" y2="0.6"><stop offset="0" stop-color="#1F5E9E"/><stop offset="0.55" stop-color="#45A0E0"/><stop offset="1" stop-color="#3B93D6"/></linearGradient></defs><rect x="0.5" y="1.5" width="15.5" height="11.5" rx="0.8" fill="url(#fg)"/><rect x="0.5" y="1" width="15.5" height="1.4" fill="#3D4A58"/><circle cx="11.6" cy="11.3" r="4.5" fill="#9AD26A"/></svg>
<div class="a" style="left:196.60px;width:400px;text-align:center;top:923.22px;line-height:20px;font-size:13px;color:#7D8C9C;">12/04/2023 17:40:40</div>
<div class="a" style="left:490.8px;top:923.22px;line-height:20px;font-size:13px;color:#566D86;font-weight:bold;letter-spacing:-0.08px;">The Hobbit Trailer.mp4</div>
<svg class="a" style="left:858.5px;top:926.22px;width:13px;height:13px" viewBox="0 0 12 12"><path d="M0.8 6.2 L4.5 10.2 L11.5 1.2" fill="none" stroke="#6AB43A" stroke-width="2.8"/></svg>
<svg class="a" style="left:983px;top:926.22px;width:13px;height:13px" viewBox="0 0 12 12"><path d="M0.8 6.2 L4.5 10.2 L11.5 1.2" fill="none" stroke="#6AB43A" stroke-width="2.8"/></svg>
<div class="a" style="left:1088.4px;top:923.22px;line-height:20px;font-size:13px;color:#7D8C9C;">Completed</div>
<div class="a" style="left:1073.60px;width:400px;text-align:center;top:923.22px;line-height:20px;font-size:13px;color:#7D8C9C;">13/04/2023 18:48:01</div>
<div class="a" style="left:1234.40px;width:400px;text-align:center;top:923.22px;line-height:20px;font-size:13px;color:#44556A;font-weight:bold;">set pending</div>
<div class="a" style="left:270.6px;top:950.84px;width:1238.9px;height:35.23px;background:#F9F9F9;border-left:1px solid #E6E9ED;border-right:1px solid #E6E9ED;box-sizing:border-box"></div>
<div class="a" style="left:270.6px;top:950.34px;width:1238.9px;height:1px;background:#E6E9ED"></div>
<svg class="a" style="left:281px;top:960.95px;width:19px;height:15.5px" viewBox="0 0 16.5 15.5"><defs><linearGradient id="fg" x1="0" y1="0" x2="1" y2="0.6"><stop offset="0" stop-color="#1F5E9E"/><stop offset="0.55" stop-color="#45A0E0"/><stop offset="1" stop-color="#3B93D6"/></linearGradient></defs><rect x="0.5" y="1.5" width="15.5" height="11.5" rx="0.8" fill="url(#fg)"/><rect x="0.5" y="1" width="15.5" height="1.4" fill="#3D4A58"/><circle cx="11.6" cy="11.3" r="4.5" fill="#9AD26A"/></svg>
<div class="a" style="left:196.60px;width:400px;text-align:center;top:958.45px;line-height:20px;font-size:13px;color:#7D8C9C;">12/04/2023 17:40:40</div>
<div class="a" style="left:490.8px;top:958.45px;line-height:20px;font-size:13px;color:#566D86;font-weight:bold;letter-spacing:-0.08px;">Iron Sky Trailer.mp4</div>
<svg class="a" style="left:858.5px;top:961.45px;width:13px;height:13px" viewBox="0 0 12 12"><path d="M0.8 6.2 L4.5 10.2 L11.5 1.2" fill="none" stroke="#6AB43A" stroke-width="2.8"/></svg>
<svg class="a" style="left:983px;top:961.45px;width:13px;height:13px" viewBox="0 0 12 12"><path d="M0.8 6.2 L4.5 10.2 L11.5 1.2" fill="none" stroke="#6AB43A" stroke-width="2.8"/></svg>
<div class="a" style="left:1088.4px;top:958.45px;line-height:20px;font-size:13px;color:#7D8C9C;">Completed</div>
<div class="a" style="left:1073.60px;width:400px;text-align:center;top:958.45px;line-height:20px;font-size:13px;color:#7D8C9C;">13/04/2023 18:47:02</div>
<div class="a" style="left:1234.40px;width:400px;text-align:center;top:958.45px;line-height:20px;font-size:13px;color:#44556A;font-weight:bold;">set pending</div>
<div class="a" style="left:230px;top:968.7px;width:1322px;height:50px;background:#fff"></div>
<div class="a" style="left:249.7px;top:983.00px;line-height:20px;font-size:13px;color:#73879C;">Copyright &copy; 2026 File Upload Script</div>
<div class="a" style="right:20px;top:983px;line-height:20px;font-size:13px;color:#73879C">Created by <b style="color:#5A738E">Yetishare</b>, a <b style="color:#5A738E">MFScripts</b> company &nbsp;|&nbsp; <b style="color:#5A738E">v5.6.0</b> &nbsp;|&nbsp; <b style="color:#5A738E">Support</b></div>
<div id="side">
<div class="a" style="left:9.5px;top:10px;width:36px;height:33px;border:1px solid #C8CED5;border-radius:50%;"></div>
<svg class="a" style="left:0;top:0;width:60px;height:60px" viewBox="0 0 60 60"><g fill="#fff" fill-rule="evenodd"><path d="M30.60 28.00 L31.96 28.75 L31.51 30.77 L29.95 30.86 L28.67 32.67 L29.10 34.16 L27.35 35.27 L26.19 34.23 L24.00 34.60 L23.25 35.96 L21.23 35.51 L21.14 33.95 L19.33 32.67 L17.84 33.10 L16.73 31.35 L17.77 30.19 L17.40 28.00 L16.04 27.25 L16.49 25.23 L18.05 25.14 L19.33 23.33 L18.90 21.84 L20.65 20.73 L21.81 21.77 L24.00 21.40 L24.75 20.04 L26.77 20.49 L26.86 22.05 L28.67 23.33 L30.16 22.90 L31.27 24.65 L30.23 25.81Z M26.80 28.00 A2.8 2.8 0 1 0 21.20 28.00 A2.8 2.8 0 1 0 26.80 28.00Z"/><path d="M39.80 21.80 L40.56 22.38 L40.10 23.89 L39.14 23.94 L37.90 25.09 L37.78 26.04 L36.24 26.39 L35.72 25.59 L34.10 25.09 L33.22 25.46 L32.14 24.31 L32.58 23.45 L32.20 21.80 L31.44 21.22 L31.90 19.71 L32.86 19.66 L34.10 18.51 L34.22 17.56 L35.76 17.21 L36.28 18.01 L37.90 18.51 L38.78 18.14 L39.86 19.29 L39.42 20.15Z M37.70 21.80 A1.7 1.7 0 1 0 34.30 21.80 A1.7 1.7 0 1 0 37.70 21.80Z"/><path d="M39.80 34.20 L40.56 34.78 L40.10 36.29 L39.14 36.34 L37.90 37.49 L37.78 38.44 L36.24 38.79 L35.72 37.99 L34.10 37.49 L33.22 37.86 L32.14 36.71 L32.58 35.85 L32.20 34.20 L31.44 33.62 L31.90 32.11 L32.86 32.06 L34.10 30.91 L34.22 29.96 L35.76 29.61 L36.28 30.41 L37.90 30.91 L38.78 30.54 L39.86 31.69 L39.42 32.55Z M37.70 34.20 A1.7 1.7 0 1 0 34.30 34.20 A1.7 1.7 0 1 0 37.70 34.20Z"/></g></svg>
<div class="a" style="left:53px;top:14px;line-height:30px;font-size:22px;color:#ECF0F1;">Site Admin</div>
<div class="a" style="left:12px;top:63px;width:205px;height:30px;background:#fff;border-radius:2px;"></div>
<div class="a" style="left:26px;top:69px;line-height:18px;font-size:13px;color:#C9CFD6;">Quick search... (Ctrl Q)</div>
<div class="mt" style="top:118.60px">Dashboard</div>
<svg class="ic" style="left:15px;top:116.6px;width:18px;height:18px;fill:#E7E7E7" viewBox="0 0 18 18"><path d="M9 1.5 L-0.5 9 L1 10.5 L2.5 9.5 V16 H7.2 V11.5 H10.8 V16 H15.5 V9.5 L17 10.5 L18.5 9 Z M13 2 h2.5 v4.5 l-2.5 -2z"/></svg>
<div class="mt" style="top:169.22px">Files</div>
<svg class="ic" style="left:15px;top:167.72px;width:18px;height:18px;fill:#E7E7E7" viewBox="0 0 18 18"><path d="M4.5 15.5 C1.5 15.5 0.5 13.5 0.5 12 C0.5 10 2 8.7 3.5 8.5 C3.5 5.5 6 3 9 3 C11.5 3 13.3 4.6 13.9 6.6 C16 6.6 17.6 8.5 17.6 11 C17.6 13.5 15.8 15.5 13.5 15.5 Z"/><path d="M8 7 h2 v4 h2 l-3 3 l-3 -3 h2z" fill="#2A3F54"/></svg>
<svg class="chev" style="left:195.5px;top:175.22px;width:11px;height:8px" viewBox="0 0 11 8"><path d="M1.3 1.5 L5.5 5.7 L9.7 1.5" fill="none" stroke="#C4CFDA" stroke-width="2.9"/></svg>
<div class="mt" style="top:219.84px">Users</div>
<svg class="ic" style="left:15px;top:219.33999999999997px;width:18px;height:18px;fill:#E7E7E7" viewBox="0 0 18 18"><circle cx="3.6" cy="3.6" r="2.8"/><circle cx="14.4" cy="3.6" r="2.8"/><circle cx="9" cy="7" r="3.2"/><path d="M-0.5 12 v-3 c0-1.8 1-2.6 2.5-2.6 c.8 .6 1.5 .8 2.5 .8 c-.6 .8 -1 1.6 -1 2.6 v2.2z M18.5 12 v-3 c0-1.8-1-2.6-2.5-2.6 c-.8 .6-1.5 .8-2.5 .8 c.6 .8 1 1.6 1 2.6 v2.2z"/><path d="M4 17 v-3.5 c0-2.5 1.2-3.6 3-3.6 c.6 .4 1.2 .6 2 .6 s1.4-.2 2-.6 c1.8 0 3 1.1 3 3.6 v3.5z"/></svg>
<svg class="chev" style="left:195.5px;top:225.83999999999997px;width:11px;height:8px" viewBox="0 0 11 8"><path d="M1.3 1.5 L5.5 5.7 L9.7 1.5" fill="none" stroke="#C4CFDA" stroke-width="2.9"/></svg>
<div class="mt" style="top:269.66px">Sharing</div>
<svg class="ic" style="left:15px;top:270.15999999999997px;width:18px;height:18px;fill:#E7E7E7" viewBox="0 0 18 18"><circle cx="12.8" cy="3.6" r="3.6"/><circle cx="12.8" cy="13.3" r="3.6"/><circle cx="3.8" cy="8.4" r="3.9"/><path d="M3.8 8.4 L12.8 3.6 M3.8 8.4 L12.8 13.3" stroke="#E7E7E7" stroke-width="2.2"/></svg>
<svg class="chev" style="left:195.5px;top:275.65999999999997px;width:11px;height:8px" viewBox="0 0 11 8"><path d="M1.3 1.5 L5.5 5.7 L9.7 1.5" fill="none" stroke="#C4CFDA" stroke-width="2.9"/></svg>
<div class="mt" style="top:321.08px">File Servers</div>
<svg class="ic" style="left:15px;top:321.58px;width:18px;height:18px;fill:#E7E7E7" viewBox="0 0 18 18"><rect x="2" y="2" width="14.5" height="14" rx="2.5" fill="none" stroke="#E7E7E7" stroke-width="2.2"/><rect x="3.5" y="7" width="11.5" height="7.8" fill="#E7E7E7" opacity=".55"/><rect x="3.5" y="4.5" width="11.5" height="1.5" fill="#E7E7E7" opacity=".3"/></svg>
<svg class="chev" style="left:195.5px;top:327.08px;width:11px;height:8px" viewBox="0 0 11 8"><path d="M1.3 1.5 L5.5 5.7 L9.7 1.5" fill="none" stroke="#C4CFDA" stroke-width="2.9"/></svg>
<div class="mt" style="top:371.70px">Advertising</div>
<svg class="ic" style="left:15px;top:372.2px;width:18px;height:18px;fill:#E7E7E7" viewBox="0 0 18 18"><path d="M0.5 6 h6 v6.5 h-6z M2.5 12 h3.3 l.8 5 h-3.3z"/><path d="M7 6.2 L16 2 V16.5 L7 12.3z" fill="none" stroke="#E7E7E7" stroke-width="2"/></svg>
<svg class="chev" style="left:195.5px;top:377.7px;width:11px;height:8px" viewBox="0 0 11 8"><path d="M1.3 1.5 L5.5 5.7 L9.7 1.5" fill="none" stroke="#C4CFDA" stroke-width="2.9"/></svg>
<div class="mt" style="top:422.32px">Plugins</div>
<svg class="ic" style="left:15px;top:422.81999999999994px;width:18px;height:18px;fill:#E7E7E7" viewBox="0 0 18 18"><path d="M2.5 8.5 L8.5 2.5 L15 9 L9.5 14 C7.5 15.5 4.5 15 3.2 13.5 C2 12 1.8 10 2.5 8.5z"/><path d="M9.8 3 L12.3 -1.3 L14.2 -0.2 L11.8 4.2z M14 7 L17.3 3.3 L18.7 4.8 L15.3 8.3z"/><path d="M4 12.2 L-0.3 16.2 L1.2 17.6 L5.5 13.6z"/></svg>
<svg class="chev" style="left:195.5px;top:428.31999999999994px;width:11px;height:8px" viewBox="0 0 11 8"><path d="M1.3 1.5 L5.5 5.7 L9.7 1.5" fill="none" stroke="#C4CFDA" stroke-width="2.9"/></svg>
<div class="mt" style="top:475.44px">Themes</div>
<svg class="ic" style="left:15px;top:475.93999999999994px;width:18px;height:18px;fill:#E7E7E7" viewBox="0 0 18 18"><path d="M0.5 2.5 h17 v13.5 h-17z M2.3 4.3 v10 h13.4 v-10z" fill-rule="evenodd"/><path d="M2.3 14.3 v-3 l3.5 -3.5 l2.5 2.5 l4 -4.5 l3.4 3.4 v5.1z"/><circle cx="5.2" cy="6.3" r="1.5"/></svg>
<svg class="chev" style="left:195.5px;top:481.43999999999994px;width:11px;height:8px" viewBox="0 0 11 8"><path d="M1.3 1.5 L5.5 5.7 L9.7 1.5" fill="none" stroke="#C4CFDA" stroke-width="2.9"/></svg>
<div class="mt" style="top:523.56px">API</div>
<svg class="ic" style="left:15px;top:524.06px;width:18px;height:18px;fill:#E7E7E7" viewBox="0 0 18 18"><path d="M1 3.5 C1 1.5 4.5 0.5 9 0.5 S17 1.5 17 3.5 V6 C17 8 13.5 9 9 9 S1 8 1 6z M1 8 C1 10 4.5 11 9 11 S17 10 17 8 V11 C17 13 13.5 14 9 14 S1 13 1 11z M1 13 C1 15 4.5 16 9 16 S17 15 17 13 V15 C17 17 13.5 18 9 18 S1 17 1 15z"/></svg>
<svg class="chev" style="left:195.5px;top:529.56px;width:11px;height:8px" viewBox="0 0 11 8"><path d="M1.3 1.5 L5.5 5.7 L9.7 1.5" fill="none" stroke="#C4CFDA" stroke-width="2.9"/></svg>
<div class="mt" style="top:576.38px">Site Configuration</div>
<svg class="ic" style="left:15px;top:576.88px;width:18px;height:18px;fill:#E7E7E7" viewBox="0 0 18 18"><path fill-rule="evenodd" d="M16.06 7.57 L17.54 7.96 L17.44 10.65 L15.94 10.93 L15.00 12.98 L15.77 14.30 L13.80 16.13 L12.54 15.27 L10.43 16.06 L10.04 17.54 L7.35 17.44 L7.07 15.94 L5.02 15.00 L3.70 15.77 L1.87 13.80 L2.73 12.54 L1.94 10.43 L0.46 10.04 L0.56 7.35 L2.06 7.07 L3.00 5.02 L2.23 3.70 L4.20 1.87 L5.46 2.73 L7.57 1.94 L7.96 0.46 L10.65 0.56 L10.93 2.06 L12.98 3.00 L14.30 2.23 L16.13 4.20 L15.27 5.46Z M12.00 9.00 A3 3 0 1 0 6.00 9.00 A3 3 0 1 0 12.00 9.00Z"/></svg>
<svg class="chev" style="left:195.5px;top:582.38px;width:11px;height:8px" viewBox="0 0 11 8"><path d="M1.3 1.5 L5.5 5.7 L9.7 1.5" fill="none" stroke="#C4CFDA" stroke-width="2.9"/></svg>
<div class="a" style="left:22.5px;top:643.5px;line-height:20px;font-size:11px;font-weight:bold;letter-spacing:.5px;color:#fff;text-shadow:1px 1px rgba(0,0,0,.6);">PLUGIN PAGES</div>
<div class="a" style="left:0;top:771.7px;width:225px;height:46px;background:linear-gradient(#334556,#2C4257);box-shadow:rgba(0,0,0,.25) 0 1px 0, inset rgba(255,255,255,.16) 0 1px 0;"></div>
<div class="a" style="left:225px;top:771.7px;width:5px;height:120px;background:#1ABB9C;"></div>
<div class="a" style="left:0;top:818.5px;width:225px;height:39px;background:rgba(255,255,255,.05);"></div>
<div class="a" style="left:26.5px;top:818px;width:1px;height:73px;background:#425668;"></div>
<div class="a" style="left:23px;top:835px;width:8px;height:8px;border-radius:50%;background:#425668;"></div>
<div class="a" style="left:23px;top:871px;width:8px;height:8px;border-radius:50%;background:#425668;"></div>
<div class="mt" style="left:44px;top:828px;font-size:12px;color:#fff;">View Queue</div>
<div class="mt" style="left:44px;top:865px;font-size:12px;">Plugin Settings</div>
<div class="mt" style="top:683.10px">Archive Manager</div>
<svg class="ic" style="left:15px;top:683.6px;width:18px;height:18px;fill:#E7E7E7" viewBox="0 0 18 18"><path d="M1 1.5 h16 v15 h-16z"/><rect x="1" y="3.2" width="16" height="0.8" fill="#2A3F54" opacity=".35"/><rect x="8" y="5.5" width="2" height="2.5" fill="#2A3F54" opacity=".5"/></svg>
<svg class="chev" style="left:198.5px;top:689.1px;width:11px;height:8px" viewBox="0 0 11 8"><path d="M1.3 1.5 L5.5 5.7 L9.7 1.5" fill="none" stroke="#C4CFDA" stroke-width="2.9"/></svg>
<div class="mt" style="top:734.40px">File Previewer</div>
<svg class="ic" style="left:15px;top:734.9px;width:18px;height:18px;fill:#E7E7E7" viewBox="0 0 18 18"><path d="M2.5 0.5 h8.5 l5 5 v12.5 h-13.5z"/><path d="M11 0.8 v4.7 h4.7" fill="none" stroke="#2A3F54" stroke-width="0.9" opacity=".6"/></svg>
<svg class="chev" style="left:198.5px;top:740.4px;width:11px;height:8px" viewBox="0 0 11 8"><path d="M1.3 1.5 L5.5 5.7 L9.7 1.5" fill="none" stroke="#C4CFDA" stroke-width="2.9"/></svg>
<div class="mt" style="top:783.60px">Media Converter</div>
<svg class="ic" style="left:15px;top:784.1px;width:18px;height:18px;fill:#E7E7E7" viewBox="0 0 18 18"><path d="M0 -0.5 h19.5 v17.5 h-19.5z M5 2.8 v4 h7.8 v-4z M5 9.3 v4.3 h7.8 v-4.3z" fill-rule="evenodd"/><rect x="15.5" y="3" width="1.5" height="2.5" fill="#2A3F54" opacity=".35"/><rect x="15.5" y="10" width="1.5" height="2.5" fill="#2A3F54" opacity=".35"/></svg>
<svg class="chev" style="left:193.5px;top:789.6px;width:11px;height:8px" viewBox="0 0 11 8"><path d="M1.3 1.5 L5.5 5.7 L9.7 1.5" fill="none" stroke="#C4CFDA" stroke-width="2.9"/></svg>
<div class="mt" style="top:905.30px">Newsletters</div>
<svg class="ic" style="left:15px;top:904.3px;width:18px;height:18px;fill:#E7E7E7" viewBox="0 0 18 18"><path d="M0.5 1.5 h17 v2 l-8.5 6 l-8.5 -6z M0.5 6.2 l8.5 6 l8.5 -6 v10.3 h-17z"/></svg>
<svg class="chev" style="left:198.5px;top:911.3px;width:11px;height:8px" viewBox="0 0 11 8"><path d="M1.3 1.5 L5.5 5.7 L9.7 1.5" fill="none" stroke="#C4CFDA" stroke-width="2.9"/></svg>
<div class="mt" style="top:955.50px">Payment Gateways</div>
<svg class="ic" style="left:15px;top:955.0px;width:18px;height:18px;fill:#E7E7E7" viewBox="0 0 18 18"><rect x="0.3" y="1.5" width="17.4" height="15" rx="1"/><rect x="1.8" y="5.5" width="14.4" height="2.2" fill="#2A3F54" opacity=".8"/><rect x="6" y="10.5" width="10.2" height="2.2" fill="#2A3F54" opacity=".8"/></svg>
<svg class="chev" style="left:198.5px;top:961.5px;width:11px;height:8px" viewBox="0 0 11 8"><path d="M1.3 1.5 L5.5 5.7 L9.7 1.5" fill="none" stroke="#C4CFDA" stroke-width="2.9"/></svg>
<div class="a" style="left:0;top:982.6px;width:230px;height:36px;background:#172D44;"></div>
<svg class="ic" style="left:20.5px;top:991px;width:17px;height:17px;fill:#5A738E" viewBox="0 0 18 18"><path fill-rule="evenodd" d="M16.06 7.57 L17.54 7.96 L17.44 10.65 L15.94 10.93 L15.00 12.98 L15.77 14.30 L13.80 16.13 L12.54 15.27 L10.43 16.06 L10.04 17.54 L7.35 17.44 L7.07 15.94 L5.02 15.00 L3.70 15.77 L1.87 13.80 L2.73 12.54 L1.94 10.43 L0.46 10.04 L0.56 7.35 L2.06 7.07 L3.00 5.02 L2.23 3.70 L4.20 1.87 L5.46 2.73 L7.57 1.94 L7.96 0.46 L10.65 0.56 L10.93 2.06 L12.98 3.00 L14.30 2.23 L16.13 4.20 L15.27 5.46Z M12.00 9.00 A3 3 0 1 0 6.00 9.00 A3 3 0 1 0 12.00 9.00Z"/></svg>
<svg class="a" style="left:77px;top:991px;width:19px;height:17px" viewBox="0 0 19 17"><g fill="none" stroke="#5A738E" stroke-width="1.8"><path d="M1 5 V1 H5 M1 1 L6 6"/><path d="M18 5 V1 H14 M18 1 L13 6"/><path d="M1 12 V16 H5 M1 16 L6 11"/><path d="M18 12 V16 H14 M18 16 L13 11"/></g></svg>
<svg class="a" style="left:134px;top:990px;width:17px;height:19px" viewBox="0 0 17 19"><path d="M3.5 8 V5.5 a5 5 0 0 1 10 0 V8" fill="none" stroke="#5A738E" stroke-width="2"/><rect x="1" y="8" width="15" height="10.5" fill="#5A738E"/></svg>
<svg class="a" style="left:191px;top:990px;width:18px;height:18px" viewBox="0 0 18 18"><path d="M5.5 3.5 A7 7 0 1 0 12.5 3.5" fill="none" stroke="#5A738E" stroke-width="1.8"/><path d="M9 1 V8.5" stroke="#5A738E" stroke-width="1.8"/></svg>
</div>
</div></body></html>
